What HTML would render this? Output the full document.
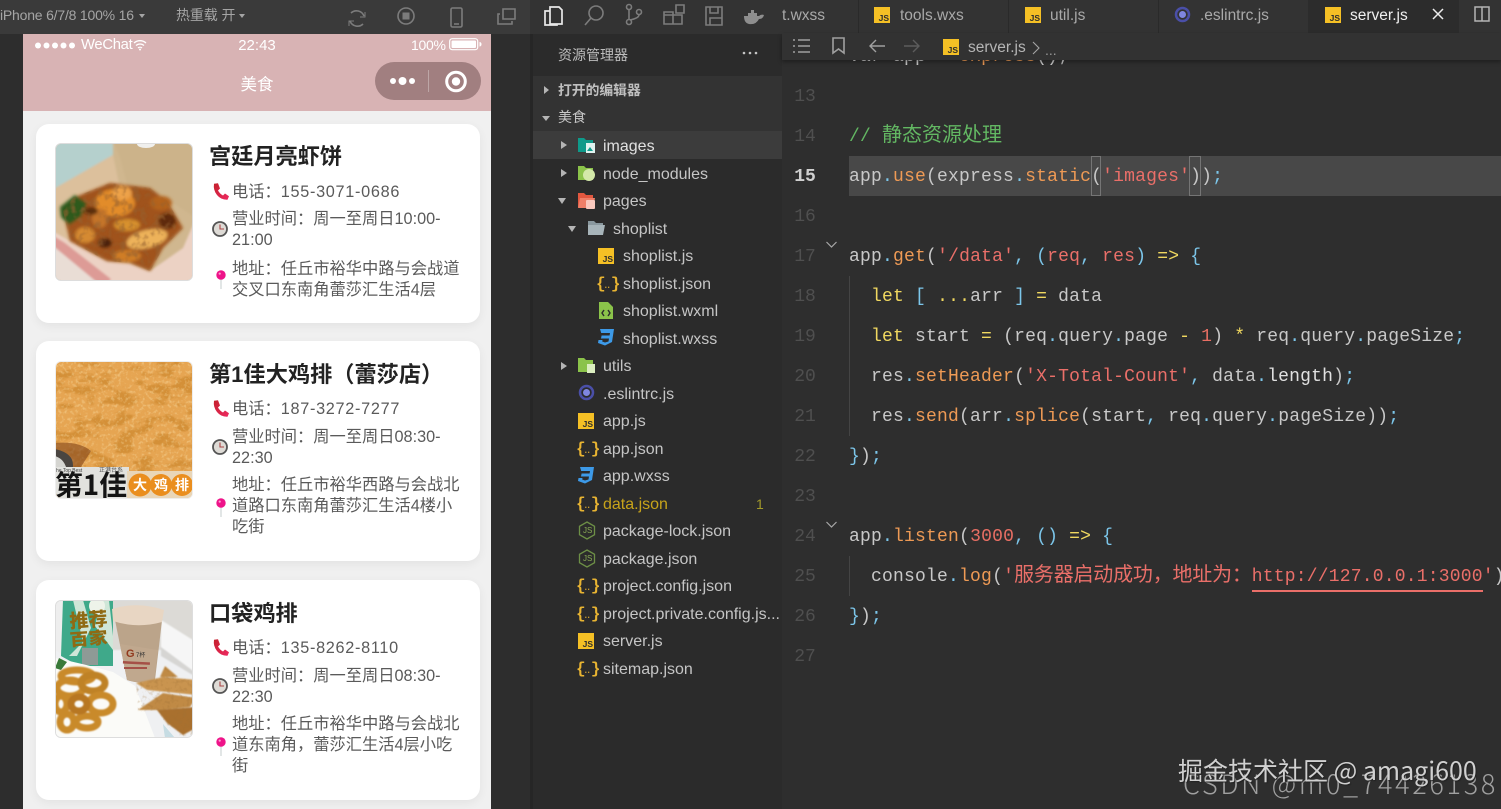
<!DOCTYPE html>
<html lang="zh"><head><meta charset="utf-8"><title>美食</title>
<style>
*{box-sizing:border-box}
html,body{margin:0;padding:0}
body{width:1501px;height:809px;overflow:hidden;background:#2e2e2e;position:relative;font-family:"Liberation Sans","Noto Sans CJK SC",sans-serif}
.a{position:absolute;white-space:nowrap}
svg{position:absolute;display:block;overflow:visible}
/* phone */
.card{position:absolute;left:36px;width:444px;background:#fff;border-radius:13px;box-shadow:0 3px 10px rgba(0,0,0,.06)}
.t{position:absolute;left:209px;font-size:22.2px;font-weight:700;color:#222;line-height:28px;white-space:nowrap}
.p{position:absolute;left:232px;font-size:16.25px;color:#5a5a5a;line-height:21px;white-space:nowrap}
.n{letter-spacing:.7px}
.ph{position:absolute;left:55px;width:138px;height:138px;border-radius:6px;overflow:hidden;border:1px solid #ddd}
/* tree */
.r{position:absolute;height:27px;line-height:27px;font-size:16px;color:#c5c5c5;white-space:nowrap;margin-top:1px}
.js{position:absolute;width:16px;height:16px;background:#f5c025;color:#2d2d2d;font:700 8.5px/9px "Liberation Sans",sans-serif;text-align:right;padding:7px 1px 0 0}
.br{position:absolute;color:#e8b432;font:700 16px/16px "Liberation Mono",monospace;letter-spacing:-1.5px;white-space:nowrap}
.br i{font-size:9px;font-style:normal;font-weight:400;letter-spacing:-2.500px;margin:0 2px 0 -1px}
.tri{position:absolute;width:0;height:0}
.tr{border-left:6px solid #b5b5b5;border-top:4.5px solid transparent;border-bottom:4.5px solid transparent}
.td{border-top:6px solid #b5b5b5;border-left:4.5px solid transparent;border-right:4.5px solid transparent}
/* code */
.c{position:absolute;left:849px;height:40px;line-height:40px;font:18px/40px "Liberation Mono","Noto Sans CJK SC",monospace;letter-spacing:.2px;color:#c8c8c8;white-space:pre}
.l{position:absolute;left:785px;width:40px;text-align:center;height:40px;font:18px/40px "Liberation Mono",monospace;color:#4f4f4f}
.f{color:#ee9a55}.s{color:#ea6f69}.u{color:#7cc6ea}.k{color:#f0d860}.m{color:#e96f64}
.cm{color:#63b863}
.tab{position:absolute;top:0;height:33px;line-height:31px;font-size:15.5px;color:#a9a9a9;white-space:nowrap}
.g{stroke:#7c7c7c;fill:none;stroke-width:1.6}
</style></head><body>

<!-- simulator surround -->
<div class="a" style="left:0;top:0;width:530px;height:34px;background:#3a3a3a"></div>
<div class="a" style="left:0;top:34px;width:23px;height:775px;background:#2d2d2d"></div>
<div class="a" style="left:491px;top:34px;width:39px;height:775px;background:#2d2d2d"></div>
<div class="a" style="left:0;top:5px;font-size:14px;line-height:20px;color:#a5a5a5;letter-spacing:-.2px">iPhone 6/7/8 100% 16</div>
<div class="tri td" style="left:139px;top:14px;border-top-color:#a5a5a5;border-left-width:3.5px;border-right-width:3.5px;border-top-width:4.5px"></div>
<div class="a" style="left:176px;top:5px;font-size:14px;line-height:20px;color:#a5a5a5;letter-spacing:-.1px">热重载 开</div>
<div class="tri td" style="left:239px;top:14px;border-top-color:#a5a5a5;border-left-width:3.5px;border-right-width:3.5px;border-top-width:4.5px"></div>
<svg style="left:340px;top:4px" width="190" height="28" viewBox="0 0 190 28">
<path class="g" d="M11 9a8 8 0 0 1 13 3M23 20a8 8 0 0 1-13-3"/><path d="M25 8v5h-5M9 22v-5h5" stroke="#7c7c7c" fill="none" stroke-width="1"/>
<circle class="g" cx="66" cy="12" r="8"/><rect x="62.500" y="8.500" width="7" height="7" fill="#7c7c7c"/>
<rect class="g" x="111" y="4" width="11" height="19" rx="1.500"/><path class="g" d="M114 20h5"/>
<path class="g" d="M160 10h-2v10h14v-3M163 5h12v10h-12z"/>
</svg>

<!-- phone -->
<div class="a" style="left:23px;top:34px;width:468px;height:775px;background:#f0f0f0;overflow:hidden"></div>
<div class="a" style="left:23px;top:34px;width:461px;height:77px;background:#d8b3b4"></div>
<div class="a" style="left:484px;top:34px;width:7px;height:77px;background:#d8b3b4"></div>
<svg style="left:34px;top:40px" width="46" height="10"><g fill="#fff"><circle cx="4" cy="5.500" r="3"/><circle cx="12.500" cy="5.500" r="3"/><circle cx="21" cy="5.500" r="3"/><circle cx="29.500" cy="5.500" r="3"/><circle cx="38" cy="5.500" r="3"/></g></svg>
<div class="a" style="left:81px;top:36px;font-size:14.800px;line-height:18px;color:#fff;letter-spacing:-.3px">WeChat</div>
<svg style="left:133px;top:39px" width="14" height="12" viewBox="0 0 14 12"><path d="M1 4a9 9 0 0 1 12 0M3 6.500a6 6 0 0 1 8 0M5 9a3 3 0 0 1 4 0" stroke="#fff" stroke-width="1.300" fill="none"/><circle cx="7" cy="10.500" r="1" fill="#fff"/></svg>
<div class="a" style="left:234px;top:37px;font-size:15px;line-height:18px;color:#fff;width:46px;text-align:center">22:43</div>
<div class="a" style="left:411px;top:36px;font-size:14px;line-height:18px;color:#fff;letter-spacing:-.3px">100%</div>
<svg style="left:449px;top:38px" width="34" height="13"><rect x=".7" y=".7" width="28" height="11" rx="2.500" stroke="#fff" fill="none" stroke-width="1.200"/><rect x="2.500" y="2.500" width="24.500" height="7.500" rx="1" fill="#fff"/><path d="M30.500 4v4.500a2 2 0 0 0 2-2.200 2 2 0 0 0-2-2.300z" fill="#fff"/></svg>
<div class="a" style="left:237px;top:74px;width:40px;text-align:center;font-size:16.500px;line-height:22px;color:#fff">美食</div>
<div class="a" style="left:375px;top:62px;width:106px;height:38px;border-radius:19px;background:#a17f80"></div>
<svg style="left:375px;top:62px" width="106" height="38"><g fill="#fff"><circle cx="18" cy="19" r="3"/><circle cx="27.500" cy="19" r="4"/><circle cx="37" cy="19" r="3"/></g><rect x="53" y="8" width="1" height="22" fill="#bda6a6"/><circle cx="81" cy="19.500" r="9.300" fill="none" stroke="#fff" stroke-width="3"/><circle cx="81" cy="19.500" r="4.200" fill="#fff"/></svg>

<div class="card" style="top:124px;height:199px"></div>
<div class="card" style="top:341px;height:220px"></div>
<div class="card" style="top:580px;height:220px"></div>

<!-- image 1 -->
<div class="ph" style="top:143px">
<svg width="138" height="138" viewBox="0 0 138 138" style="left:-1px;top:-1px">
<defs><filter id="b1" x="-10%" y="-10%" width="120%" height="120%"><feGaussianBlur stdDeviation="1.600"/></filter>
<filter id="b0" x="-10%" y="-10%" width="120%" height="120%"><feGaussianBlur stdDeviation="1"/></filter>
<filter id="tx" x="0" y="0" width="100%" height="100%"><feTurbulence type="fractalNoise" baseFrequency=".14" numOctaves="3" seed="4"/><feColorMatrix values="0 0 0 0 .3  0 0 0 0 .12  0 0 0 0 .03  4 0 0 0 -1.900"/><feGaussianBlur stdDeviation=".5"/></filter>
<clipPath id="fd"><path d="M8 68L18 55 55 40 95 45 112 58 128 85 108 105 95 128 75 120 52 118 15 98z"/></clipPath></defs>
<rect width="138" height="138" fill="#d0b78f"/>
<g filter="url(#b0)">
<path d="M-3-3h61v15L-3 47z" fill="#b5d0cd"/>
<path d="M-3 47l61-35 8 38-50 60-19-20z" fill="#dcc09c"/>
<path d="M58-3h83v78l-23-15-45-15-8-30z" fill="#ccb38a"/>
<path d="M-3 88l18 10 37 20 23 2 20 8 33-23 13-30v66H-3z" fill="#ecd2c4"/>
<path d="M-3 92l13 8 46 36-4 5H44L-3 102z" fill="#dd9b96"/>
<path d="M-3 102l47 39H-3z" fill="#e9ddd5"/>
</g>
<g filter="url(#b1)">
<path d="M8 68L18 55 55 40 95 45 112 58 128 85 108 105 95 128 75 120 52 118 15 98z" fill="#a0521a"/>
<path d="M5 64l15-12 12 8-6 14-12 8-8-8z" fill="#2f5a1e"/>
<ellipse cx="60" cy="60" rx="20" ry="14" fill="#e28c2c"/><ellipse cx="67" cy="50" rx="10" ry="7" fill="#eda24a"/>
<ellipse cx="92" cy="96" rx="21" ry="9" fill="#edb25a" transform="rotate(-14 92 96)"/>
<ellipse cx="72" cy="113" rx="14" ry="6" fill="#cf7d27"/><ellipse cx="30" cy="92" rx="10" ry="8" fill="#d58a30"/><ellipse cx="45" cy="75" rx="8" ry="10" fill="#c4742a"/><ellipse cx="106" cy="60" rx="11" ry="7" fill="#b4641f"/><ellipse cx="72" cy="82" rx="13" ry="6" fill="#d7912f"/>
<ellipse cx="112" cy="78" rx="9" ry="8" fill="#5e2a0c"/><ellipse cx="50" cy="100" rx="7" ry="5" fill="#4c220b"/><ellipse cx="36" cy="68" rx="7" ry="4" fill="#5b2d0d"/>
</g>
<rect width="138" height="138" filter="url(#tx)" clip-path="url(#fd)" opacity=".6"/>
<ellipse cx="91" cy="1" rx="9" ry="4" fill="#f0f0ee"/>
</svg></div>

<!-- image 2 -->
<div class="ph" style="top:361px;border-color:#eee">
<svg width="138" height="138" viewBox="0 0 138 138" style="left:-1px;top:-1px">
<defs><filter id="tx2" x="0" y="0" width="100%" height="100%"><feTurbulence type="fractalNoise" baseFrequency=".05 .09" numOctaves="4" seed="9"/><feColorMatrix values="0 0 0 0 .66  0 0 0 0 .28  0 0 0 0 .04  5 0 0 0 -2.400"/></filter>
<filter id="tx2b" x="0" y="0" width="100%" height="100%"><feTurbulence type="fractalNoise" baseFrequency=".3" numOctaves="2" seed="2"/><feColorMatrix values="0 0 0 0 .98  0 0 0 0 .8  0 0 0 0 .45  4 0 0 0 -2"/></filter></defs>
<rect width="138" height="138" fill="#e6a552"/>
<rect width="138" height="138" filter="url(#tx2)"/>
<rect width="138" height="138" filter="url(#tx2b)" opacity=".35"/>
<path d="M0 82q24-2 36 8l-10 16H0z" fill="#8a4d1f" opacity=".65"/>
<path d="M0 88q18 4 18 16v8H0z" fill="#4a4541"/><path d="M0 95q10 3 12 15H0z" fill="#d5d5d1"/>
<rect x="0" y="106" width="74" height="32" fill="#e2e2de"/>
<text x="0" y="134" font-family="Noto Sans CJK SC,sans-serif" font-weight="700" font-size="28" fill="#141414" textLength="72" lengthAdjust="spacingAndGlyphs">第1佳</text>
<text x="1" y="111" font-family="Liberation Sans,sans-serif" font-size="5" fill="#444">he Top Best</text>
<text x="44" y="111" font-family="Noto Sans CJK SC,sans-serif" font-size="6" fill="#555">正港台系</text>
<rect x="72" y="110" width="66" height="28" fill="#e9d6b8"/>
<circle cx="85" cy="124" r="11.500" fill="#ea8e1e"/><circle cx="106" cy="124" r="11" fill="#ea8e1e"/><circle cx="127" cy="124" r="11" fill="#ea8e1e"/>
<g font-family="Noto Sans CJK SC,sans-serif" font-weight="700" font-size="14" fill="#fff" text-anchor="middle"><text x="85" y="129">大</text><text x="106" y="129">鸡</text><text x="127" y="129">排</text></g>
</svg></div>

<!-- image 3 -->
<div class="ph" style="top:600px">
<svg width="138" height="138" viewBox="0 0 138 138" style="left:-1px;top:-1px">
<defs><filter id="b4" x="-10%" y="-10%" width="120%" height="120%"><feGaussianBlur stdDeviation=".9"/></filter>
<filter id="tx3" x="0" y="0" width="100%" height="100%"><feTurbulence type="fractalNoise" baseFrequency=".25" numOctaves="2" seed="3"/><feColorMatrix values="0 0 0 0 .35  0 0 0 0 .17  0 0 0 0 .04  3 0 0 0 -1.500"/></filter>
<clipPath id="ck"><path d="M81 83l27-6 2-11 13 11 15 3v58h-10l-16-12-10-16-19 2z"/></clipPath></defs>
<rect width="138" height="138" fill="#eff0f2"/>
<g filter="url(#b4)">
<rect x="-3" y="-3" width="144" height="53" fill="#dcdad6"/>
<path d="M106 20l35 22v32l-35-26z" fill="#f6f6f6"/><path d="M106 47l35 26v4l-35-21z" fill="#d6d5d3"/>
</g>
<path d="M0 0h8v55L0 50z" fill="#eee"/>
<path d="M8 0h50v66H24L6 56z" fill="#3fa98a"/>
<path d="M18 0l10 42-14 14h8l14-28L28 0zM46 0l-6 26 18 24V36L54 0z" fill="#cfe6d8"/>
<circle cx="42" cy="6" r="8" fill="#eef3ea"/>
<text x="15" y="28" font-family="Noto Sans CJK SC,sans-serif" font-weight="900" font-size="19" fill="#8f6a14" textLength="38" lengthAdjust="spacingAndGlyphs" transform="rotate(-4 15 28)">推荐</text>
<text x="15" y="46" font-family="Noto Sans CJK SC,sans-serif" font-weight="900" font-size="17" fill="#8f6a14" textLength="38" lengthAdjust="spacingAndGlyphs" transform="rotate(-4 15 46)">百家</text>
<rect x="27" y="48" width="16" height="17" fill="#8f9a96"/>
<path d="M58 10q26-8 50 2l-8 68q-14 5-28 0z" fill="#bba48a"/><path d="M57 9q26-8 52 1l-2 12q-25 7-49-1z" fill="#e8d6c3"/>
<path d="M65 44l38 6-4 30q-14 4-27 0z" fill="#c0a88e"/>
<text x="71" y="57" font-family="Liberation Sans,sans-serif" font-weight="700" font-size="11" fill="#923a1e">G</text><text x="81" y="57" font-family="Noto Sans CJK SC,sans-serif" font-size="6" fill="#333">7杯</text>
<rect x="68" y="61" width="27" height="2.500" fill="#a55047" transform="rotate(3 68 61)"/><rect x="69" y="67" width="23" height="2" fill="#a55047"/>
<path d="M0 58q30 6 58 14l22 14 20 52H0z" fill="#fbfbf8"/>
<path d="M108 124l12 14h-10z" fill="#c6dce3"/>
<path d="M4 58l8 4-6 8-6-2z" fill="#3a7a3a"/>
<g filter="url(#b4)" fill="none" stroke="#c98a2c" stroke-width="7">
<ellipse cx="22" cy="76" rx="16" ry="6"/><ellipse cx="15" cy="88" rx="13" ry="8"/><ellipse cx="38" cy="83" rx="12" ry="8" stroke="#bf8228"/><ellipse cx="46" cy="104" rx="12" ry="9"/><ellipse cx="12" cy="122" rx="7" ry="8"/><ellipse cx="32" cy="122" rx="11" ry="6"/><ellipse cx="6" cy="104" rx="6" ry="8"/><ellipse cx="24" cy="104" rx="8" ry="7" stroke="#b87724"/>
</g>
<g filter="url(#b4)">
<path d="M105 77l5-11 13 11z" fill="#bf8a45"/>
<path d="M81 83l27-6 33 3v15l-49-5z" fill="#c9944f"/>
<path d="M102 110l39-3v21l-13 7-16-12z" fill="#a9702e"/>
<path d="M83 110l25-17 33 5-6 9-30 3z" fill="#c08a45"/>
</g>
<rect width="138" height="138" filter="url(#tx3)" clip-path="url(#ck)" opacity=".35"/>
</svg></div>

<!-- card text -->
<div class="t" style="top:143px">宫廷月亮虾饼</div>
<div class="p" style="top:182px">电话：<span class="n">155-3071-0686</span></div>
<div class="p" style="top:209px">营业时间：周一至周日10:00-<br>21:00</div>
<div class="p" style="top:259px">地址：任丘市裕华中路与会战道<br>交叉口东南角蕾莎汇生活4层</div>

<div class="t" style="top:361px">第1佳大鸡排（蕾莎店）</div>
<div class="p" style="top:399px">电话：<span class="n">187-3272-7277</span></div>
<div class="p" style="top:427px">营业时间：周一至周日08:30-<br>22:30</div>
<div class="p" style="top:475px">地址：任丘市裕华西路与会战北<br>道路口东南角蕾莎汇生活4楼小<br>吃街</div>

<div class="t" style="top:600px">口袋鸡排</div>
<div class="p" style="top:638px">电话：<span class="n">135-8262-8110</span></div>
<div class="p" style="top:666px">营业时间：周一至周日08:30-<br>22:30</div>
<div class="p" style="top:714px">地址：任丘市裕华中路与会战北<br>道东南角，蕾莎汇生活4层小吃<br>街</div>

<!-- card icons -->
<svg width="0" height="0" style="left:0;top:0"><defs>
<linearGradient id="tg" x1="0" y1="0" x2="1" y2="1"><stop offset="0" stop-color="#c4202c"/><stop offset="1" stop-color="#ee2a62"/></linearGradient>
<g id="tel"><path d="M2 .8L6 .3l2 5.200-2 2q2 3.500 5 5l2-2 4 2.700-1.500 3.500Q9 17 5 12 1 7 2 .8z" fill="url(#tg)"/></g>
<g id="clk"><circle cx="8" cy="8" r="7" fill="#dedbd6" stroke="#555" stroke-width="1.800"/><path d="M8 3.500V8h4" stroke="#a44" stroke-width="1.100" fill="none"/></g>
<g id="pin"><path d="M5 9v10" stroke="#cfd6d6" stroke-width="1.200"/><circle cx="5" cy="5" r="4.700" fill="#ee1389"/><circle cx="3.700" cy="3.600" r="1.100" fill="#ff9ad0"/></g>
</defs></svg>
<svg style="left:212px;top:183px" width="17" height="17"><use href="#tel"/></svg>
<svg style="left:212px;top:400px" width="17" height="17"><use href="#tel"/></svg>
<svg style="left:212px;top:639px" width="17" height="17"><use href="#tel"/></svg>
<svg style="left:212px;top:221px" width="17" height="17"><use href="#clk"/></svg>
<svg style="left:212px;top:439px" width="17" height="17"><use href="#clk"/></svg>
<svg style="left:212px;top:678px" width="17" height="17"><use href="#clk"/></svg>
<svg style="left:216px;top:270px" width="10" height="20"><use href="#pin"/></svg>
<svg style="left:216px;top:498px" width="10" height="20"><use href="#pin"/></svg>
<svg style="left:216px;top:737px" width="10" height="20"><use href="#pin"/></svg>

<!-- IDE activity/tab bar -->
<div class="a" style="left:530px;top:0;width:971px;height:34px;background:#333"></div>
<div class="a" style="left:530px;top:34px;width:3px;height:775px;background:#262626"></div>
<svg style="left:540px;top:2px" width="240" height="30" viewBox="0 0 240 30">
<path d="M10 5h9l3 3v14h-12z" stroke="#e8e8e8" stroke-width="1.700" fill="none"/><path d="M10 9H5v14h12v-1" stroke="#e8e8e8" stroke-width="1.700" fill="none"/>
<circle class="g" cx="56" cy="11" r="7"/><path class="g" d="M51 16l-6 7"/>
<circle class="g" cx="89" cy="5" r="2.500"/><circle class="g" cx="89" cy="20" r="2.500"/><circle class="g" cx="99" cy="10" r="2.500"/><path class="g" d="M89 8v10M99 13q0 3-9 5"/>
<path class="g" d="M124 13h9v9h-9zM133 13h9v9h-9zM124 13v-3h9v3M136 3h8v8h-8z"/>
<path class="g" d="M166 5h16v18h-16zM170 5v6h8V5M170 23v-7h12"/>
<path d="M204 14h4v-3h3v-3h3v3h3v3h2q2-2 5-1-1 4-5 4-3 6-10 5-5-1-5-8z" fill="#8e8e8e"/>
</svg>
<div class="a" style="left:782px;top:0;height:33px;line-height:31px;font-size:15.500px;color:#a9a9a9">t.wxss</div>
<div class="a" style="left:858px;top:0;width:1px;height:33px;background:#2a2a2a"></div>
<div class="a" style="left:1008px;top:0;width:1px;height:33px;background:#2a2a2a"></div>
<div class="a" style="left:1158px;top:0;width:1px;height:33px;background:#2a2a2a"></div>
<div class="a" style="left:1308px;top:0;width:151px;height:33px;background:#2c2c2c"></div>
<div class="js" style="left:874px;top:7px">JS</div><div class="tab" style="left:900px">tools.wxs</div>
<div class="js" style="left:1025px;top:7px">JS</div><div class="tab" style="left:1050px">util.js</div>
<svg style="left:1174px;top:6px" width="18" height="18"><circle cx="8.500" cy="8.500" r="6.500" fill="none" stroke="#4a4fa8" stroke-width="2.500"/><circle cx="8.500" cy="8.500" r="3.500" fill="#7f86e0"/></svg>
<div class="tab" style="left:1200px">.eslintrc.js</div>
<div class="js" style="left:1325px;top:7px">JS</div><div class="tab" style="left:1350px;color:#f0f0f0">server.js</div>
<svg style="left:1432px;top:8px" width="12" height="12"><path d="M1 1l10 10M11 1L1 11" stroke="#eee" stroke-width="1.500"/></svg>
<svg style="left:1474px;top:6px" width="17" height="17"><path d="M1 1h14v14H1zM8 1v14" stroke="#b5b5b5" stroke-width="1.500" fill="none"/></svg>

<!-- sidebar -->
<div class="a" style="left:533px;top:34px;width:249px;height:775px;background:#2b2b2b"></div>
<div class="a" style="left:558px;top:45px;font-size:14px;line-height:20px;color:#bdbdbd">资源管理器</div>
<svg style="left:741px;top:50px" width="18" height="6"><g fill="#c5c5c5"><circle cx="3" cy="3" r="1.300"/><circle cx="9" cy="3" r="1.300"/><circle cx="15" cy="3" r="1.300"/></g></svg>
<div class="a" style="left:533px;top:76px;width:249px;height:55px;background:#333"></div>
<div class="a" style="left:533px;top:131px;width:249px;height:28px;background:#3c3c3c"></div>
<div class="tri tr" style="left:544px;top:86px;border-left-width:5px;border-top-width:4px;border-bottom-width:4px"></div>
<div class="a" style="left:558px;top:81px;font-size:13.800px;line-height:19px;color:#c0c0c0;font-weight:700">打开的编辑器</div>
<div class="tri td" style="left:542px;top:116px;border-top-width:5px;border-left-width:4px;border-right-width:4px"></div>
<div class="a" style="left:558px;top:108px;font-size:14px;line-height:19px;color:#c8c8c8">美食</div>

<div class="tri tr" style="left:561px;top:141px"></div>
<svg style="left:577px;top:137px" width="20" height="17"><path d="M1 1h6l2 2h7v12H1z" fill="#0e9a8a"/><rect x="9" y="6" width="9" height="10" fill="#dff3f0"/><path d="M10 14l3-4 3 4z" fill="#0e9a8a"/></svg>
<div class="r" style="left:603px;top:132px;color:#e0e0e0">images</div>
<div class="tri tr" style="left:561px;top:169px"></div>
<svg style="left:577px;top:165px" width="20" height="17"><path d="M1 1h6l2 2h7v12H1z" fill="#8bc34a"/><circle cx="12" cy="10" r="6" fill="#d3e8a8"/></svg>
<div class="r" style="left:603px;top:160px">node_modules</div>
<div class="tri td" style="left:558px;top:198px"></div>
<svg style="left:577px;top:192px" width="20" height="17"><path d="M1 1h6l2 2h7v12H1z" fill="#e2573f"/><path d="M3 6h15l-2 10H1z" fill="#ef7f68"/><rect x="9" y="8" width="9" height="9" rx="1" fill="#f9c8bd"/></svg>
<div class="r" style="left:603px;top:187px">pages</div>
<div class="tri td" style="left:568px;top:226px"></div>
<svg style="left:587px;top:220px" width="20" height="16"><path d="M1 1h6l2 2h7v3H1z" fill="#8a989e"/><path d="M1 5h17l-2 10H1z" fill="#a7b4b9"/></svg>
<div class="r" style="left:613px;top:215px">shoplist</div>
<div class="js" style="left:598px;top:248px">JS</div><div class="r" style="left:623px;top:242px">shoplist.js</div>
<div class="br" style="left:596px;top:276px">{<i>..</i>}</div><div class="r" style="left:623px;top:270px">shoplist.json</div>
<svg style="left:599px;top:302px" width="15" height="17"><path d="M0 0h9l5 5v12H0z" fill="#8bc34a"/><path d="M5 8l-2 3 2 3M9 8l2 3-2 3" stroke="#2b2b2b" stroke-width="1.400" fill="none"/></svg>
<div class="r" style="left:623px;top:297px">shoplist.wxml</div>
<svg style="left:598px;top:329px" width="16" height="17"><path d="M2 0h14l-2 13-7 3.500L0 14l.5-3h4l-.3 1.500L7 13.500l3.500-1 .5-3H3l.6-3h8l.4-2.500H3.200z" fill="#3d9ae8"/></svg>
<div class="r" style="left:623px;top:325px">shoplist.wxss</div>
<div class="tri tr" style="left:561px;top:362px"></div>
<svg style="left:577px;top:357px" width="20" height="17"><path d="M1 1h6l2 2h7v12H1z" fill="#8bc34a"/><rect x="10" y="7" width="8" height="9" fill="#dbeec0"/></svg>
<div class="r" style="left:603px;top:352px">utils</div>
<svg style="left:578px;top:384px" width="18" height="18"><circle cx="8.500" cy="8.500" r="6.500" fill="none" stroke="#4a4fa8" stroke-width="2.500"/><circle cx="8.500" cy="8.500" r="3.500" fill="#7f86e0"/></svg>
<div class="r" style="left:603px;top:380px">.eslintrc.js</div>
<div class="js" style="left:578px;top:413px">JS</div><div class="r" style="left:603px;top:407px">app.js</div>
<div class="br" style="left:576px;top:441px">{<i>..</i>}</div><div class="r" style="left:603px;top:435px">app.json</div>
<svg style="left:578px;top:467px" width="16" height="17"><path d="M2 0h14l-2 13-7 3.500L0 14l.5-3h4l-.3 1.500L7 13.500l3.500-1 .5-3H3l.6-3h8l.4-2.500H3.200z" fill="#3d9ae8"/></svg>
<div class="r" style="left:603px;top:462px">app.wxss</div>
<div class="br" style="left:576px;top:496px">{<i>..</i>}</div><div class="r" style="left:603px;top:490px;color:#c7a31a">data.json</div>
<div class="r" style="left:756px;top:490px;color:#a39a2a;font-size:14px">1</div>
<svg style="left:578px;top:521px" width="18" height="19"><path d="M9 1l7.500 4.300v8.400L9 18l-7.500-4.300V5.300z" fill="none" stroke="#6d8f46" stroke-width="1.300"/></svg>
<div class="a" style="left:583px;top:525px;font:8px/11px 'Liberation Sans',sans-serif;color:#88aa55">JS</div>
<div class="r" style="left:603px;top:517px">package-lock.json</div>
<svg style="left:578px;top:549px" width="18" height="19"><path d="M9 1l7.500 4.300v8.400L9 18l-7.500-4.300V5.300z" fill="none" stroke="#6d8f46" stroke-width="1.300"/></svg>
<div class="a" style="left:583px;top:553px;font:8px/11px 'Liberation Sans',sans-serif;color:#88aa55">JS</div>
<div class="r" style="left:603px;top:545px">package.json</div>
<div class="br" style="left:576px;top:578px">{<i>..</i>}</div><div class="r" style="left:603px;top:572px">project.config.json</div>
<div class="br" style="left:576px;top:606px">{<i>..</i>}</div><div class="r" style="left:603px;top:600px;width:178px;overflow:hidden">project.private.config.js...</div>
<div class="js" style="left:578px;top:633px">JS</div><div class="r" style="left:603px;top:627px">server.js</div>
<div class="br" style="left:576px;top:661px">{<i>..</i>}</div><div class="r" style="left:603px;top:655px">sitemap.json</div>

<!-- editor -->
<div class="a" style="left:782px;top:34px;width:719px;height:775px;background:#2e2e2e"></div>
<div class="l" style="top:77px">13</div><div class="l" style="top:117px">14</div><div class="l" style="top:157px;color:#d0d0d0;font-weight:700">15</div><div class="l" style="top:197px">16</div><div class="l" style="top:237px">17</div><div class="l" style="top:277px">18</div><div class="l" style="top:317px">19</div><div class="l" style="top:357px">20</div><div class="l" style="top:397px">21</div><div class="l" style="top:437px">22</div><div class="l" style="top:477px">23</div><div class="l" style="top:517px">24</div><div class="l" style="top:557px">25</div><div class="l" style="top:597px">26</div><div class="l" style="top:637px">27</div>

<div class="a" style="left:849px;top:156px;width:652px;height:40px;background:#484848"></div>
<div class="a" style="left:1091px;top:156px;width:10px;height:40px;border:1px solid #757575"></div>
<div class="a" style="left:1189px;top:156px;width:12px;height:40px;border:1px solid #757575"></div>
<div class="a" style="left:849px;top:276px;width:1px;height:160px;background:#444"></div>
<div class="a" style="left:849px;top:556px;width:1px;height:40px;background:#444"></div>
<svg style="left:825px;top:240px" width="14" height="10"><path d="M1.500 2l5 5 5-5" stroke="#a8a8a8" stroke-width="1.200" fill="none"/></svg>
<svg style="left:825px;top:520px" width="14" height="10"><path d="M1.500 2l5 5 5-5" stroke="#a8a8a8" stroke-width="1.200" fill="none"/></svg>

<div class="c" style="top:37px"><span style="color:#c8c8c8">var</span> app <span class="k">=</span> <span class="f">express</span>();</div>
<div class="c cm" style="top:117px">// <span style="font-size:20px;letter-spacing:0">静态资源处理</span></div>
<div class="c" style="top:157px">app<span class="u">.</span><span class="f">use</span>(express<span class="u">.</span><span class="f">static</span>(<span style="color:#ea6f69">'images'</span>))<span class="u">;</span></div>
<div class="c" style="top:237px">app<span class="u">.</span><span class="f">get</span>(<span class="s">'/data'</span><span class="u">,</span> <span class="u">(</span><span class="s">req</span><span class="u">,</span> <span class="s">res</span><span class="u">)</span> <span class="k">=&gt;</span> <span class="u">{</span></div>
<div class="c" style="top:277px">  <span class="k">let</span> <span class="u">[</span> <span class="k">...</span>arr <span class="u">]</span> <span class="k">=</span> data</div>
<div class="c" style="top:317px">  <span class="k">let</span> start <span class="k">=</span> (req<span class="u">.</span>query<span class="u">.</span>page <span class="k">-</span> <span class="m">1</span>) <span class="k">*</span> req<span class="u">.</span>query<span class="u">.</span>pageSize<span class="u">;</span></div>
<div class="c" style="top:357px">  res<span class="u">.</span><span class="f">setHeader</span>(<span class="s">'X-Total-Count'</span><span class="u">,</span> data<span class="u">.</span><span style="color:#e0e0e0">length</span>)<span class="u">;</span></div>
<div class="c" style="top:397px">  res<span class="u">.</span><span class="f">send</span>(arr<span class="u">.</span><span class="f">splice</span>(start<span class="u">,</span> req<span class="u">.</span>query<span class="u">.</span>pageSize))<span class="u">;</span></div>
<div class="c" style="top:437px"><span class="u">}</span>)<span class="u">;</span></div>
<div class="c" style="top:517px">app<span class="u">.</span><span class="f">listen</span>(<span class="m">3000</span><span class="u">,</span> <span class="u">()</span> <span class="k">=&gt;</span> <span class="u">{</span></div>
<div class="c" style="top:557px">  console<span class="u">.</span><span class="f">log</span>(<span class="s">'<span style="font-size:20px;letter-spacing:-.2px">服务器启动成功，地址为：</span><span style="border-bottom:2px solid #ea6f69;padding-bottom:3px">http://127.0.0.1:3000</span>'</span>)</div>
<div class="c" style="top:597px"><span class="u">}</span>)<span class="u">;</span></div>

<!-- breadcrumb -->
<div class="a" style="left:782px;top:33px;width:719px;height:27px;background:#323232;box-shadow:0 2px 4px rgba(0,0,0,.35)"></div>
<svg style="left:790px;top:36px" width="180" height="22" viewBox="0 0 180 22">
<path d="M8 4h12M8 10h12M8 16h12M3 4h2M3 10h2M3 16h2" stroke="#a0a0a0" stroke-width="1.500" fill="none"/>
<path d="M43 2h11v15l-5.500-4-5.500 4z" stroke="#a0a0a0" stroke-width="1.600" fill="none"/>
<path d="M95 10H80M86 4l-6 6 6 6" stroke="#a0a0a0" stroke-width="1.400" fill="none"/>
<path d="M114 10h15M123 4l6 6-6 6" stroke="#5c5c5c" stroke-width="1.400" fill="none"/>
</svg>
<div class="js" style="left:943px;top:39px">JS</div>
<div class="a" style="left:968px;top:38px;font-size:15.500px;line-height:20px;color:#b5b5b5">server.js</div>
<svg style="left:1031px;top:41px" width="10" height="14"><path d="M2 1l6 6-6 6" stroke="#a5a5a5" stroke-width="1.100" fill="none"/></svg>
<div class="a" style="left:1045px;top:40px;font-size:14px;line-height:20px;color:#999">...</div>

<!-- watermarks -->
<div class="a" style="left:1183px;top:766px;font-size:27px;line-height:34px;color:#a0a0a0;letter-spacing:2.7px;font-family:'Noto Sans CJK SC',sans-serif;font-weight:300">CSDN @m0_74426138</div>
<div class="a" style="left:1178px;top:754px;font-size:25px;line-height:32px;color:#d0d0d0;text-shadow:1px 1px 1px #222;font-family:'Noto Sans CJK SC',sans-serif">掘金技术社区 @ amagi600</div>
</body></html>
